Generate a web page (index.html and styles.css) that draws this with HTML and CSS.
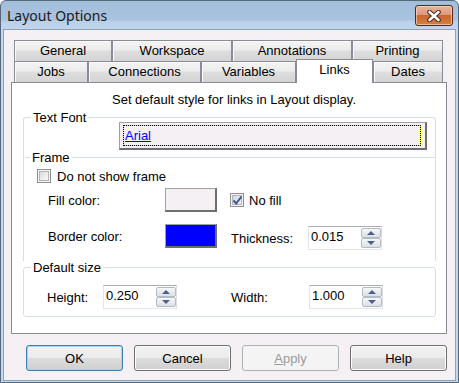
FILE: index.html
```html
<!DOCTYPE html>
<html lang="en">
<head>
  <meta charset="UTF-8" />
  <title>Layout Options</title>
  <link rel="stylesheet" href="styles.css">
</head>
<body>
  <div class="window">

    <!-- Title bar -->
    <div class="titlebar">
      <span class="title">Layout Options</span>
      <button class="close" aria-label="Close">
        <svg width="14" height="12" viewBox="0 0 14 12">
          <path d="M2.5 2 L11.5 10 M11.5 2 L2.5 10" stroke="#4a2418" stroke-width="4.6" stroke-linecap="round"/>
          <path d="M2.5 2 L11.5 10 M11.5 2 L2.5 10" stroke="#ffffff" stroke-width="2.6" stroke-linecap="round"/>
        </svg>
      </button>
    </div>

    <div class="client">

      <!-- Tabs -->
      <div class="tabs">
        <div class="tab-row">
          <div class="tab" style="width: 98px">General</div>
          <div class="tab" style="width: 120px">Workspace</div>
          <div class="tab" style="width: 120px">Annotations</div>
          <div class="tab" style="width: 91px">Printing</div>
        </div>
        <div class="tab-row front">
          <div class="tab" style="width: 74px">Jobs</div>
          <div class="tab" style="width: 113px">Connections</div>
          <div class="tab" style="width: 95px">Variables</div>
          <div class="tab active" style="width: 77px">Links</div>
          <div class="tab" style="width: 70px">Dates</div>
        </div>
      </div>

      <div class="panel">
        <p class="intro">Set default style for links in Layout display.</p>

        <div class="group font-group">
          <div class="group-title">Text Font</div>
          <button class="font-button"><span class="focus"><span class="font-name">Arial</span></span></button>

          <div class="sep">
            <div class="group-title">Frame</div>
          </div>

          <label class="check-row">
            <span class="check"></span>
            <span>Do not show frame</span>
          </label>

          <div class="row fill-row">
            <span class="label">Fill color:</span>
            <span class="swatch"></span>
            <span class="check checked">
              <svg width="11" height="11" viewBox="0 0 11 11">
                <path d="M1.5 5.5 L4.2 8.5 L9.5 1.5" fill="none" stroke="#3d5591" stroke-width="2"/>
              </svg>
            </span>
            <span class="check-label">No fill</span>
          </div>

          <div class="row border-row">
            <span class="label">Border color:</span>
            <span class="swatch blue"></span>
            <span class="label thick-label">Thickness:</span>
            <div class="spin">
              <span class="spin-value">0.015</span>
              <div class="spin-buttons">
                <span class="spin-btn"><span class="arrow up"></span></span>
                <span class="spin-btn"><span class="arrow down"></span></span>
              </div>
            </div>
          </div>
        </div>

        <div class="group size-group">
          <div class="group-title">Default size</div>
          <div class="row size-row">
            <span class="label height-label">Height:</span>
            <div class="spin">
              <span class="spin-value">0.250</span>
              <div class="spin-buttons">
                <span class="spin-btn"><span class="arrow up"></span></span>
                <span class="spin-btn"><span class="arrow down"></span></span>
              </div>
            </div>
            <span class="label width-label">Width:</span>
            <div class="spin">
              <span class="spin-value">1.000</span>
              <div class="spin-buttons">
                <span class="spin-btn"><span class="arrow up"></span></span>
                <span class="spin-btn"><span class="arrow down"></span></span>
              </div>
            </div>
          </div>
        </div>
      </div>

      <!-- Dialog buttons -->
      <div class="buttons">
        <button class="btn default">OK</button>
        <button class="btn">Cancel</button>
        <button class="btn" disabled><u>A</u>pply</button>
        <button class="btn">Help</button>
      </div>
    </div>
  </div>
</body>
</html>
```

FILE: styles.css
```css
* {
  box-sizing: border-box;
  margin: 0;
  padding: 0;
}
html, body {
  width: 100%;
  height: 100%;
  overflow: hidden;
}
body {
  font-family: "Liberation Sans", Arial, sans-serif;
  font-size: 13px;
  color: #000;
  background: #fff;
}
button {
  font: inherit;
  color: inherit;
}

/* --- Window frame --- */
.window {
  width: 459px;
  height: 383px;
  display: flex;
  flex-direction: column;
  border: 1px solid #56687c;
  border-radius: 6px 6px 0 0;
  padding: 0 2px 1px 2px;
  background: linear-gradient(to bottom, #a3bedb 0, #a9c3df 19px, #b9cfe9 20px, #c3d7ee 29px, #c3d7ee 100%);
}
.titlebar {
  height: 28px;
  display: flex;
  align-items: center;
  justify-content: space-between;
  padding-left: 4px;
}
.title {
  font-family: "Noto Sans", sans-serif;
  font-size: 14px;
  color: #1a1a1a;
  margin-top: 1px;
}
.close {
  width: 38px;
  height: 21px;
  margin-right: 3px;
  margin-top: 1px;
  border: 1px solid #5d2418;
  border-radius: 3px;
  background: linear-gradient(to bottom, #e9b3a0 0, #dd9a7d 45%, #c8662f 50%, #d5813f 100%);
  box-shadow: inset 0 0 0 1px rgba(255, 230, 210, 0.6);
  display: flex;
  align-items: center;
  justify-content: center;
}

/* --- Client area --- */
.client {
  flex: 1;
  border: 1px solid #8ea2b6;
  background: #f4f0f4;
  padding: 10px 8px 0 7px;
}

/* --- Tabs --- */
.tabs {
  margin: 0 3px;
}
.tab-row {
  display: flex;
  height: 21px;
  align-items: flex-end;
}
.tab {
  height: 21px;
  border: 1px solid #898c95;
  border-bottom: none;
  background: linear-gradient(to bottom, #f3f3f3 0, #ececec 45%, #dedede 50%, #d4d4d4 100%);
  box-shadow: inset 1px 1px 0 #fbfbfb;
  text-align: center;
  line-height: 20px;
}
.tab.active {
  position: relative;
  height: 24px;
  margin-bottom: -1px;
  background: #fff;
  box-shadow: none;
  line-height: 19px;
}

.panel {
  height: 252px;
  background: #fff;
  border: 1px solid #898c95;
}
.intro {
  padding: 9px 0 0 10px;
  line-height: 16px;
  text-align: center;
}

/* --- Group boxes --- */
.group {
  margin: 9px 10px 0 11px;
  border: 1px solid #d5dfe5;
  border-radius: 3px;
  padding-bottom: 9px;
}
.font-group {
  border-bottom: none;
  border-radius: 3px 3px 0 0;
}
.group-title {
  width: fit-content;
  margin: -8px 0 0 7px;
  padding: 0 2px;
  line-height: 15px;
  background: #fff;
}
.sep {
  margin: 7px 0 0 1px;
  border-top: 1px solid #d5dfe5;
}
.sep .group-title {
  margin-left: 5px;
}
.size-group {
  margin-top: 6px;
  padding-bottom: 7px;
}

.font-button {
  display: block;
  width: 308px;
  height: 28px;
  margin: -3px 0 0 95px;
  padding: 2px 4px 2px 3px;
  border: 1px solid #a0a0a0;
  border-right: 2px solid #6e6e6e;
  border-bottom: 2px solid #6e6e6e;
  background: #f4f0f4;
  text-align: left;
}
.focus {
  display: block;
  height: 100%;
  border: 1px dotted #000;
  background: linear-gradient(#f4f0f4, #f4f0f4) padding-box, #f0e400 border-box;
  padding-left: 1px;
  line-height: 20px;
}
.font-name {
  color: #0000ff;
  text-decoration: underline;
}

/* --- Checkboxes --- */
.check-row {
  display: flex;
  align-items: center;
  gap: 6px;
  margin: 3px 0 0 13px;
  height: 16px;
}
.check {
  width: 14px;
  height: 14px;
  flex-shrink: 0;
  border: 1px solid #8e8f8f;
  background: linear-gradient(135deg, #cfd0d2 0, #f0f0f0 60%, #fafafa 100%);
  box-shadow: inset 0 0 0 1px #f4f4f4, inset 0 0 0 2px #b3b5b9;
  display: flex;
  align-items: center;
  justify-content: center;
}
.check.checked {
  background: linear-gradient(135deg, #c8d2df 0, #e6ebf2 60%, #f4f6f9 100%);
}
.check-label {
  margin-left: 5px;
}

/* --- Rows --- */
.row {
  display: flex;
  align-items: center;
}
.label {
  flex-shrink: 0;
}
.fill-row {
  margin: 4px 0 0 24px;
}
.fill-row .label,
.border-row .label:first-child {
  width: 117px;
}
.fill-row .check {
  margin-left: 13px;
}
.border-row {
  margin: 12px 0 0 24px;
}
.border-row .label:first-child {
  margin-bottom: 4px;
}
.thick-label {
  width: 77px;
  margin-left: 14px;
}

.swatch {
  width: 52px;
  height: 24px;
  flex-shrink: 0;
  border: 1px solid #a0a0a0;
  border-right: 2px solid #6e6e6e;
  border-bottom: 2px solid #6e6e6e;
  background: #f4f0f4;
}
.swatch.blue {
  background: #0000ff;
  margin-bottom: 4px;
}

/* --- Spin boxes --- */
.spin {
  width: 74px;
  height: 24px;
  flex-shrink: 0;
  display: flex;
  align-items: center;
  justify-content: space-between;
  border: 1px solid #abadb3;
  border-color: #abadb3 #dbdfe6 #e3e9ef #e2e3ea;
  background: #fff;
  padding: 1px 0 1px 2px;
}
.spin-value {
  line-height: 16px;
  margin-bottom: 2px;
}
.spin-buttons {
  width: 20px;
  height: 20px;
  display: flex;
  flex-direction: column;
  justify-content: space-between;
}
.spin-btn {
  height: 10px;
  border: 1px solid #b4bbc5;
  border-radius: 2px;
  background: linear-gradient(to bottom, #f6f8fa 0, #e8ebf0 50%, #dce1e8 100%);
  display: flex;
  align-items: center;
  justify-content: center;
}
.arrow {
  width: 0;
  height: 0;
  border-left: 4px solid transparent;
  border-right: 4px solid transparent;
}
.arrow.up {
  border-bottom: 4px solid #4d6089;
}
.arrow.down {
  border-top: 4px solid #4d6089;
}

.size-row {
  margin: 10px 0 0 23px;
}
.height-label {
  width: 56px;
}
.width-label {
  width: 78px;
  margin-left: 54px;
}

/* --- Dialog buttons --- */
.buttons {
  display: flex;
  justify-content: flex-end;
  gap: 11px;
  margin-top: 11px;
}
.btn {
  width: 97px;
  height: 26px;
  border: 1px solid #707070;
  border-radius: 3px;
  background: linear-gradient(to bottom, #f2f2f2 0, #ebebeb 50%, #dddddd 50%, #cfcfcf 100%);
  box-shadow: inset 0 0 0 1px #fcfcfc;
}
.btn.default {
  border-color: #3c7fb1;
  box-shadow: inset 0 0 0 1px #9fd7f3;
}
.btn:disabled {
  border-color: #adb2b5;
  background: #f4f4f4;
  box-shadow: none;
  color: #9a9a9a;
}
```
